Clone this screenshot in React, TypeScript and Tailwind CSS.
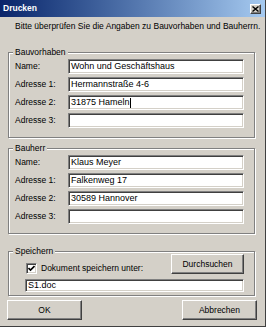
import React from 'react';

const sunken =
  'border border-t-[#808080] border-l-[#808080] border-r-white border-b-white shadow-[inset_1px_1px_0_#404040,inset_-1px_-1px_0_#d4d0c8]';
const raised =
  'border border-t-white border-l-white border-r-[#404040] border-b-[#404040] shadow-[inset_-1px_-1px_0_#808080,inset_1px_1px_0_#d4d0c8]';

function Field({ value, caret, className = 'h-[15px] w-[176px]' }: { value?: string; caret?: boolean; className?: string }) {
  return (
    <div className={`flex items-center bg-white pl-[2px] text-[9px] text-black ${sunken} ${className}`}>
      <span className="whitespace-nowrap">{value}</span>
      {caret && <span className="h-[10px] w-px bg-black" />}
    </div>
  );
}

function Row({ label, value, caret }: { label: string; value?: string; caret?: boolean }) {
  return (
    <div className="flex items-center">
      <span className="w-[53px] text-[8.5px]">{label}</span>
      <Field value={value} caret={caret} />
    </div>
  );
}

function Group({ title, rows }: { title: string; rows: { label: string; value?: string; caret?: boolean }[] }) {
  return (
    <fieldset className="w-[247px] border border-[#808080] pl-[6px] pr-[10px] shadow-[inset_1px_1px_0_#fff,1px_1px_0_#fff]">
      <legend className="-ml-[2px] bg-[#d4d0c8] px-[2px] text-[8.5px] leading-[11px]">{title}</legend>
      <div className="flex flex-col gap-[3px] pt-[1px] pb-[9px]">
        {rows.map((r) => (
          <Row key={r.label} {...r} />
        ))}
      </div>
    </fieldset>
  );
}

export default function App() {
  return (
    <div className="h-[327px] w-[266px] border-r border-b border-[#404040] bg-[#d4d0c8] font-['Liberation_Sans',Arial,sans-serif] text-black">
      {/* title bar */}
      <div className="flex h-[17px] items-center justify-between bg-gradient-to-r from-[#0a246a] to-[#a6caf0] pl-[3px] pr-[4px]">
        <span className="text-[8.5px] font-bold text-white">Drucken</span>
        <div className={`flex h-[10px] w-[11px] items-center justify-center bg-[#d4d0c8] ${raised}`}>
          <svg width="7" height="6" viewBox="0 0 7 6">
            <path d="M0.5 0.5 L6.5 5.5 M6.5 0.5 L0.5 5.5" stroke="#000" strokeWidth="1.4" />
          </svg>
        </div>
      </div>

      <div className="pl-[8px]">
        <p className="mt-[4px] ml-[7px] whitespace-nowrap text-[8.5px] leading-[11px]">
          Bitte überprüfen Sie die Angaben zu Bauvorhaben und Bauherrn.
        </p>

        <div className="mt-[15px]">
          <Group
            title="Bauvorhaben"
            rows={[
              { label: 'Name:', value: 'Wohn und Geschäftshaus' },
              { label: 'Adresse 1:', value: 'Hermannstraße 4-6' },
              { label: 'Adresse 2:', value: '31875 Hameln', caret: true },
              { label: 'Adresse 3:' },
            ]}
          />
        </div>

        <div className="mt-[5px]">
          <Group
            title="Bauherr"
            rows={[
              { label: 'Name:', value: 'Klaus Meyer' },
              { label: 'Adresse 1:', value: 'Falkenweg 17' },
              { label: 'Adresse 2:', value: '30589 Hannover' },
              { label: 'Adresse 3:' },
            ]}
          />
        </div>

        <fieldset className="mt-[12px] w-[247px] border border-[#808080] pl-[6px] pr-[10px] shadow-[inset_1px_1px_0_#fff,1px_1px_0_#fff]">
          <legend className="-ml-[2px] bg-[#d4d0c8] px-[2px] text-[8.5px] leading-[11px]">Speichern</legend>
          <div className="pl-[10px] pb-[3px]">
            <div className="-mt-[3px] flex items-end justify-between">
              <label className="mb-[-1px] flex items-center gap-[4px] pl-[1px] text-[8.5px]">
                <span className={`flex h-[11px] w-[11px] items-center justify-center bg-white ${sunken}`}>
                  <svg width="7" height="7" viewBox="0 0 7 7">
                    <path d="M0.5 3 L2.5 5 L6.5 1" stroke="#000" strokeWidth="1.6" fill="none" />
                  </svg>
                </span>
                Dokument speichern unter:
              </label>
              <button className={`h-[20px] w-[73px] bg-[#d4d0c8] text-[8.5px] ${raised}`}>Durchsuchen</button>
            </div>
            <div className="mt-[5px]">
              <Field value="S1.doc" className="h-[13px] w-[219px]" />
            </div>
          </div>
        </fieldset>

        <div className="-ml-px mt-[4px] flex w-[250px] justify-between">
          <button className={`h-[20px] w-[75px] bg-[#d4d0c8] text-[8.5px] ${raised}`}>OK</button>
          <button className={`h-[20px] w-[75px] bg-[#d4d0c8] text-[8.5px] ${raised}`}>Abbrechen</button>
        </div>
      </div>
    </div>
  );
}
